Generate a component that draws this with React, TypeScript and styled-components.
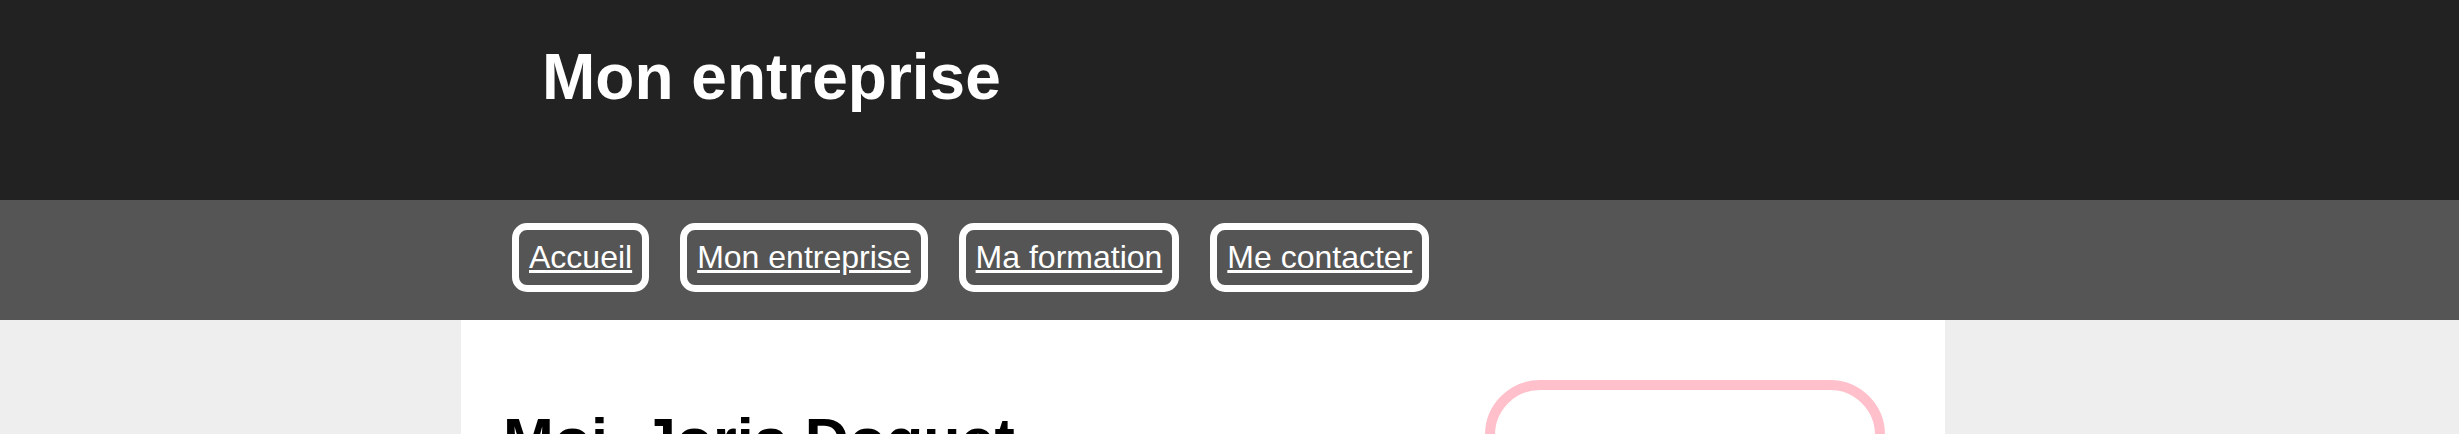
import React from "react";
import styled, { createGlobalStyle } from "styled-components";

const GlobalStyle = createGlobalStyle`
  html, body {
    margin: 0;
    padding: 0;
    background: #eeeeee;
    font-family: "Liberation Sans", Arial, sans-serif;
  }
  * { box-sizing: border-box; }
`;

const Header = styled.header`
  height: 200px;
  background: #222222;
  padding: 40px 0 0 542px;
`;

const SiteTitle = styled.h1`
  margin: 0;
  font-size: 64px;
  font-weight: bold;
  line-height: normal;
  color: #ffffff;
`;

const Nav = styled.nav`
  height: 120px;
  background: #555555;
  padding: 23px 0 0 512px;
  display: flex;
  align-items: flex-start;
  gap: 31px;
`;

const NavLink = styled.a`
  display: block;
  border: 7px solid #ffffff;
  border-radius: 15px;
  padding: 9px 10px;
  font-size: 32px;
  line-height: normal;
  color: #ffffff;
  text-decoration: underline;
`;

const Main = styled.main`
  margin-left: 461px;
  width: 1484px;
  background: #ffffff;
  display: flex;
  justify-content: space-between;
  align-items: flex-start;
  padding: 60px 60px 40px 42px;
`;

const Heading = styled.h1`
  margin: 25px 0 0;
  font-size: 61px;
  font-weight: bold;
  line-height: normal;
  color: #000000;
`;

const Aside = styled.aside`
  width: 400px;
  height: 360px;
  border: 10px solid #ffc0cb;
  border-radius: 55px;
`;

const links = ["Accueil", "Mon entreprise", "Ma formation", "Me contacter"];

export default function App() {
  return (
    <>
      <GlobalStyle />
      <Header>
        <SiteTitle>Mon entreprise</SiteTitle>
      </Header>
      <Nav>
        {links.map((l) => (
          <NavLink key={l} href="#">
            {l}
          </NavLink>
        ))}
      </Nav>
      <Main>
        <Heading>Moi, Joris Doguet</Heading>
        <Aside />
      </Main>
    </>
  );
}
